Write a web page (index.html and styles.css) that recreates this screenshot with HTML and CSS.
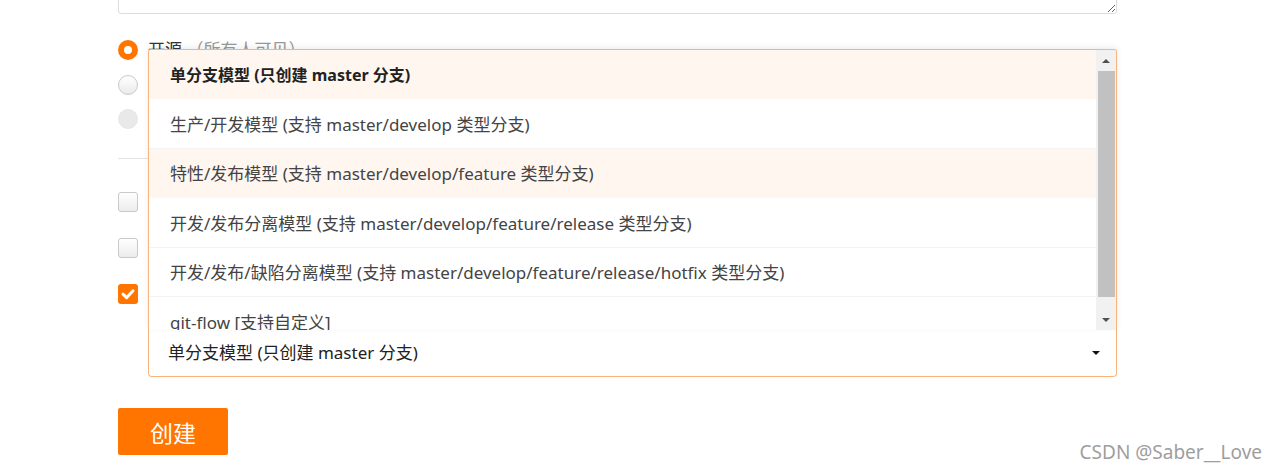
FILE: index.html
```html
<!DOCTYPE html>
<html lang="zh-CN">
  <head>
    <meta charset="UTF-8" />
    <meta name="viewport" content="width=device-width, initial-scale=1.0" />
    <title>新建仓库</title>
    <link rel="stylesheet" href="styles.css">
  </head>
  <body>
    <form class="repo-form">
      <textarea class="desc"></textarea>

      <div class="radio-list">
        <label class="radio-row">
          <span class="radio checked"></span>
          <span class="label">开源 <span class="hint">（所有人可见）</span></span>
        </label>
        <label class="radio-row">
          <span class="radio"></span>
          <span class="label">私有 <span class="hint">（仅仓库成员可见）</span></span>
        </label>
        <label class="radio-row">
          <span class="radio disabled"></span>
          <span class="label">企业内部开源 <span class="hint">（仅企业成员可见）</span></span>
        </label>
      </div>

      <hr class="sep" />

      <div class="check-list">
        <label class="check-row">
          <span class="checkbox"></span>
          <span class="label">使用Readme文件初始化这个仓库</span>
        </label>
        <label class="check-row">
          <span class="checkbox"></span>
          <span class="label">选择默认提交类型模板</span>
        </label>
        <label class="check-row">
          <span class="checkbox checked">
            <svg viewBox="0 0 20 20" width="20" height="20">
              <path d="M5 10.2 L8.6 13.6 L15 6.8" fill="none" stroke="#fff" stroke-width="3" stroke-linecap="round" stroke-linejoin="round" />
            </svg>
          </span>
          <span class="label">选择分支模型</span>
        </label>
      </div>

      <div class="select open">
        <div class="menu">
          <ul class="options">
            <li class="option active">单分支模型 (只创建 master 分支)</li>
            <li class="option">生产/开发模型 (支持 master/develop 类型分支)</li>
            <li class="option hover">特性/发布模型 (支持 master/develop/feature 类型分支)</li>
            <li class="option">开发/发布分离模型 (支持 master/develop/feature/release 类型分支)</li>
            <li class="option">开发/发布/缺陷分离模型 (支持 master/develop/feature/release/hotfix 类型分支)</li>
            <li class="option">git-flow [支持自定义]</li>
          </ul>
          <div class="scrollbar">
            <div class="scroll-btn"><span class="tri up"></span></div>
            <div class="scroll-thumb"></div>
            <div class="scroll-btn"><span class="tri down"></span></div>
          </div>
        </div>
        <span class="value">单分支模型 (只创建 master 分支)</span>
        <span class="caret"></span>
      </div>

      <button type="button" class="btn-create">创建</button>
    </form>

    <div class="watermark">CSDN @Saber__Love</div>
  </body>
</html>
```

FILE: styles.css
```css
body {
  margin: 0;
  background: #fff;
  font-family: "Noto Sans", "Noto Sans CJK SC", sans-serif;
  font-size: 17px;
  color: #333;
  overflow: hidden;
}

.repo-form {
  width: 999px;
  margin-left: 118px;
}

.desc {
  display: block;
  box-sizing: border-box;
  width: 100%;
  height: 60px;
  margin-top: -46px;
  border: 1px solid #dcdcdc;
  border-radius: 3px;
  resize: vertical;
}

.radio-list {
  display: flex;
  flex-direction: column;
  gap: 14.5px;
  margin-top: 26px;
}

.radio-row,
.check-row {
  display: flex;
  align-items: center;
  height: 20px;
  line-height: 20px;
}

.label {
  margin-left: 10px;
  color: #333;
}

.hint {
  color: #999;
}

.radio {
  box-sizing: border-box;
  width: 20px;
  height: 20px;
  border-radius: 50%;
  border: 1px solid #c9c9c9;
  background: linear-gradient(#fff, #eaeaea);
}

.radio.checked {
  border: 6px solid #ff7500;
  background: #fff;
}

.radio.disabled {
  border-color: #e6e6e6;
  background: #e9e9e9;
}

.sep {
  margin: 29px 0 0;
  border: none;
  border-top: 1px solid #e3e3e3;
}

.check-list {
  display: flex;
  flex-direction: column;
  gap: 26px;
  margin-top: 33px;
}

.checkbox {
  box-sizing: border-box;
  width: 20px;
  height: 20px;
  border-radius: 3px;
  border: 1px solid #c9c9c9;
  background: linear-gradient(#fff, #ececec);
}

.checkbox.checked {
  border: none;
  background: #ff7500;
}

.checkbox svg {
  display: block;
}

/* select with its option list opened above */
.select {
  position: relative;
  box-sizing: border-box;
  height: 47px;
  margin: 26px 0 0 30px;
  padding-left: 19px;
  border: 1px solid #f8b47c;
  border-top: none;
  border-radius: 0 0 4px 4px;
  display: flex;
  align-items: center;
}

.select .value {
  flex: 1;
  color: #222;
  line-height: 22px;
}

.caret {
  width: 0;
  height: 0;
  margin-right: 16px;
  border-left: 4px solid transparent;
  border-right: 4px solid transparent;
  border-top: 4px solid #111;
}

.menu {
  position: absolute;
  left: -1px;
  right: -1px;
  bottom: 100%;
  height: 281px;
  box-sizing: border-box;
  border: 1px solid #f8b47c;
  border-bottom: none;
  border-radius: 3px 3px 0 0;
  background: #fff;
  box-shadow: 0 -2px 6px rgba(0, 0, 0, 0.07);
  display: flex;
  overflow: hidden;
}

.options {
  flex: 1;
  margin: 0;
  padding: 0;
  list-style: none;
  overflow: hidden;
}

.option {
  box-sizing: border-box;
  height: 49.4px;
  padding-left: 21px;
  display: flex;
  align-items: center;
  color: #444;
  border-bottom: 1px solid #f3f3f3;
  white-space: nowrap;
}

.option.active {
  font-size: 16px;
  font-weight: bold;
  color: #222;
  background: #fff6f0;
  border-bottom-color: #fff6f0;
}

.option.hover {
  background: #fff6f0;
  border-bottom-color: #fff6f0;
}

.scrollbar {
  width: 20px;
  background: #f1f1f1;
  display: flex;
  flex-direction: column;
}

.scroll-btn {
  height: 21px;
  display: flex;
  align-items: center;
  justify-content: center;
}

.scroll-thumb {
  flex: 1;
  margin: 0 1px 12px 2px;
  background: #c1c1c1;
}

.tri {
  width: 0;
  height: 0;
  border-left: 4px solid transparent;
  border-right: 4px solid transparent;
}

.tri.up {
  border-bottom: 4px solid #505050;
}

.tri.down {
  border-top: 4px solid #505050;
}

.btn-create {
  display: block;
  width: 110px;
  height: 47px;
  margin-top: 31px;
  border: none;
  border-radius: 2px;
  background: #ff7500;
  color: #fff;
  font-family: "Noto Sans CJK SC", sans-serif;
  font-size: 23px;
}

.watermark {
  position: absolute;
  right: 14px;
  bottom: 6px;
  font-family: "Noto Sans", "Noto Sans CJK SC", sans-serif;
  font-size: 19px;
  color: #9e9e9e;
}
```
